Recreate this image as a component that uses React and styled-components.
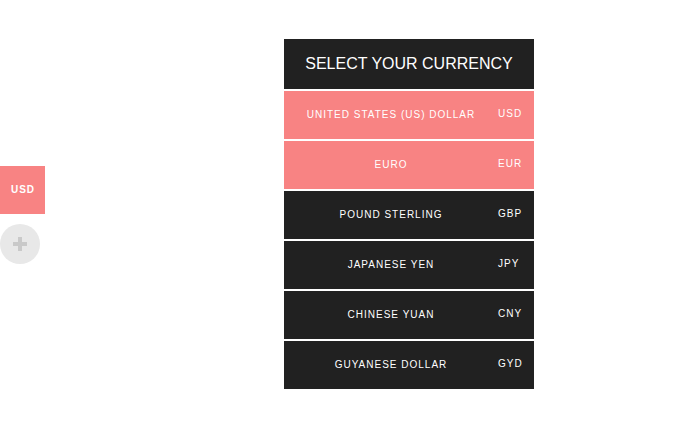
import React, { useState } from 'react';
import styled, { createGlobalStyle } from 'styled-components';

const GlobalStyle = createGlobalStyle`
  html, body {
    margin: 0;
    padding: 0;
    background: #fff;
    font-family: "Liberation Sans", Arial, sans-serif;
  }
`;

const Page = styled.div`
  display: flex;
  height: 425px;
`;

const Side = styled.aside`
  width: 45px;
  padding-top: 166px;
  display: flex;
  flex-direction: column;
  gap: 10px;
`;

const CurrentButton = styled.button`
  width: 45px;
  height: 48px;
  border: 0;
  padding: 0 0 1px 1px;
  background: #f88383;
  color: #fff;
  font-family: inherit;
  font-size: 10px;
  font-weight: bold;
  letter-spacing: 1px;
`;

const AddButton = styled.button`
  width: 40px;
  height: 40px;
  border: 0;
  padding: 0;
  border-radius: 50%;
  background: #e8e8e8;
  display: flex;
  align-items: center;
  justify-content: center;
`;

const Main = styled.main`
  padding-left: 239px;
  padding-top: 39px;
`;

const Panel = styled.div`
  width: 250px;
`;

const Header = styled.h2`
  margin: 0;
  height: 50px;
  border-bottom: 2px solid #fff;
  background: #212121;
  color: #fff;
  font-size: 16px;
  font-weight: normal;
  display: flex;
  align-items: center;
  justify-content: center;
`;

const Row = styled.div`
  display: grid;
  grid-template-columns: 214px 1fr;
  align-items: center;
  height: 48px;
  border-bottom: 2px solid #fff;
  background: ${p => (p.selected ? '#f88383' : '#212121')};
  color: #fff;
  font-size: 10px;
  letter-spacing: 1px;
  cursor: pointer;
`;

const Name = styled.span`
  text-align: center;
  padding-bottom: 1px;
`;

const Code = styled.span`
  padding-bottom: 3px;
`;

const currencies = [
  ['UNITED STATES (US) DOLLAR', 'USD'],
  ['EURO', 'EUR'],
  ['POUND STERLING', 'GBP'],
  ['JAPANESE YEN', 'JPY'],
  ['CHINESE YUAN', 'CNY'],
  ['GUYANESE DOLLAR', 'GYD'],
];

const App = () => {
  const [selected] = useState(['USD', 'EUR']);

  return (
    <Page>
      <GlobalStyle />
      <Side>
        <CurrentButton>USD</CurrentButton>
        <AddButton>
          <svg width="14" height="14" viewBox="0 0 14 14">
            <rect x="5" y="0" width="4" height="14" fill="#c9c9c9" />
            <rect x="0" y="5" width="14" height="4" fill="#c9c9c9" />
          </svg>
        </AddButton>
      </Side>
      <Main>
        <Panel>
          <Header>SELECT YOUR CURRENCY</Header>
          {currencies.map(([name, code]) => (
            <Row key={code} selected={selected.includes(code)}>
              <Name>{name}</Name>
              <Code>{code}</Code>
            </Row>
          ))}
        </Panel>
      </Main>
    </Page>
  );
};

export default App;
